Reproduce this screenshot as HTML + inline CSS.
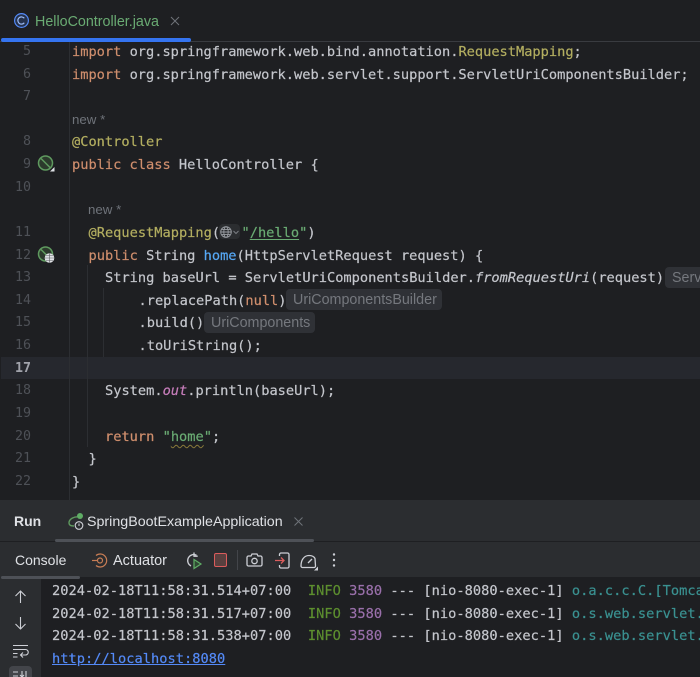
<!DOCTYPE html>
<html><head><meta charset="utf-8"><style>
html,body{margin:0;padding:0;background:#1e1f22}
#r{position:relative;width:700px;height:677px;overflow:hidden;background:#1e1f22;filter:blur(.3px)}
#r>*{position:absolute}
.l,.n,.s{white-space:pre;font-family:"DejaVu Sans Mono","Liberation Mono",monospace;font-size:13.67px;line-height:22px;height:22px;color:#c4c6cc;margin-top:1px;-webkit-text-stroke:.2px currentColor}
.s{letter-spacing:.03px}
.n{width:31px;left:0;text-align:right;color:#4e5157;font-size:13.3px;-webkit-text-stroke:0}
.u{font-family:"Liberation Sans",sans-serif;white-space:pre}
.k{color:#cf8e6d}.a{color:#b3ae60}.t{color:#6aab73}.m{color:#56a8f5}.f{color:#c77dbb;font-style:italic}
.i{font-style:italic}
.h{font-family:"Liberation Sans",sans-serif;font-size:14.3px;height:21px;line-height:23px;background:#2f3136;color:#75787e;border-radius:4px;padding:0 5px 0 7px;white-space:pre}
.nw{font-family:"Liberation Sans",sans-serif;font-size:13.3px;color:#6f737a;line-height:18px;white-space:pre;margin-top:1px}
.g{color:#5d8f2f}.p{color:#9a70ab}.c{color:#3a9191}
.w{text-decoration:underline wavy #8a7a3a 1px;text-underline-offset:3px}
svg{overflow:visible}
</style></head><body><div id="r">
<div style="left:0;top:41px;width:700px;height:1px;background:#393b40"></div>
<div style="left:1px;top:38px;width:190px;height:4px;border-radius:2px;background:#3574f0"></div>
<svg style="left:14px;top:13px" width="16" height="16" viewBox="0 0 16 16"><circle cx="7.5" cy="7.5" r="6.9" fill="#25324d" stroke="#548af7" stroke-width="1.2"/><path d="M10.300 5.300A3.600 3.600 0 1 0 10.300 9.700" fill="none" stroke="#9dbcf7" stroke-width="1.200"/></svg>
<div class="u" style="left:35px;top:13px;font-size:14.3px;line-height:18px;color:#6aab73">HelloController.java</div>
<svg style="left:171px;top:17px" width="8" height="8" viewBox="0 0 8 8"><path d="M0 0l8 8M8 0L0 8" stroke="#6f737a" stroke-width="1"/></svg>

<div style="left:1px;top:357px;width:699px;height:22px;background:#26282e"></div>
<div style="left:69px;top:42px;width:1px;height:458px;background:#2c2e32"></div>
<div style="left:87px;top:265px;width:1px;height:182px;background:#2c2e32"></div>
<div style="left:103px;top:288px;width:1px;height:69px;background:#2c2e32"></div>

<div class="n" style="top:40px">5</div>
<div class="n" style="top:62.6px">6</div>
<div class="n" style="top:85px">7</div>
<div class="n" style="top:130px">8</div>
<div class="n" style="top:153px">9</div>
<div class="n" style="top:176px">10</div>
<div class="n" style="top:221px">11</div>
<div class="n" style="top:244px">12</div>
<div class="n" style="top:266px">13</div>
<div class="n" style="top:289px">14</div>
<div class="n" style="top:311px">15</div>
<div class="n" style="top:334px">16</div>
<div class="n" style="top:357px;color:#a1a3ab;font-weight:bold">17</div>
<div class="n" style="top:379px">18</div>
<div class="n" style="top:402px">19</div>
<div class="n" style="top:425px">20</div>
<div class="n" style="top:447px">21</div>
<div class="n" style="top:470px">22</div>

<div class="l" style="left:72px;top:40px"><span class="k">import</span> org.springframework.web.bind.annotation.<span class="a">RequestMapping</span>;</div>
<div class="l" style="left:72px;top:62.6px"><span class="k">import</span> org.springframework.web.servlet.support.ServletUriComponentsBuilder;</div>
<div class="nw" style="left:72px;top:110px">new *</div>
<div class="l" style="left:72px;top:130px"><span class="a">@Controller</span></div>
<div class="l" style="left:72px;top:153px"><span class="k">public class</span> HelloController {</div>
<div class="nw" style="left:88px;top:200px">new *</div>
<div style="left:219px;top:224px;width:21px;height:15px;border-radius:4px;background:#2b2d30"></div>
<div class="l" style="left:88.5px;top:221px"><span class="a">@RequestMapping</span>(</div>
<svg style="left:220px;top:226px" width="20" height="12" viewBox="0 0 20 12"><g fill="none" stroke="#9a9da3" stroke-width=".9"><circle cx="6" cy="6" r="5.300"/><ellipse cx="6" cy="6" rx="2.200" ry="5.300"/><path d="M1 6h10M1.800 3.400h8.400M1.800 8.600h8.400"/></g><path d="M13.500 5l2.500 2.500L18.500 5" fill="none" stroke="#7a7d83" stroke-width="1"/></svg>
<div class="l" style="left:241.500px;top:221px"><span class="t">"<span style="text-decoration:underline;text-underline-offset:2px">/hello</span>"</span>)</div>
<div class="l" style="left:88.500px;top:244px"><span class="k">public</span> String <span class="m">home</span>(HttpServletRequest request) {</div>
<div class="l" style="left:105px;top:266px">String baseUrl = ServletUriComponentsBuilder.<span class="i">fromRequestUri</span>(request)</div>
<div class="h" style="left:665px;top:267px;width:40px">Serv</div>
<div class="l" style="left:138.500px;top:289px">.replacePath(<span class="k">null</span>)</div>
<div class="h" style="left:286px;top:289px">UriComponentsBuilder</div>
<div class="l" style="left:138.500px;top:311px">.build()</div>
<div class="h" style="left:204px;top:312px">UriComponents</div>
<div class="l" style="left:138.500px;top:334px">.toUriString();</div>
<div class="l" style="left:105px;top:379px">System.<span class="f">out</span>.println(baseUrl);</div>
<div class="l" style="left:105px;top:425px"><span class="k">return</span> <span class="t">"<span class="w">home</span>"</span>;</div>
<div class="l" style="left:88.500px;top:447px">}</div>
<div class="l" style="left:72px;top:470px">}</div>

<svg style="left:37px;top:155px" width="18" height="18" viewBox="0 0 18 18"><circle cx="8.500" cy="8" r="7" fill="#2c3a2c" stroke="#5f9a5f" stroke-width="1.500"/><path d="M4 3.500l9 9" stroke="#5f9a5f" stroke-width="1.500"/><path d="M13 16.500h4.500V12z" fill="#dfe1e5"/></svg>
<svg style="left:37px;top:246px" width="18" height="18" viewBox="0 0 18 18"><circle cx="8.500" cy="8" r="7" fill="#2c3a2c" stroke="#5f9a5f" stroke-width="1.500"/><path d="M4 3.500l9 9" stroke="#5f9a5f" stroke-width="1.500"/><circle cx="12.500" cy="12" r="4.800" fill="#dfe1e5"/><path d="M8 12h9M12.500 7.500v9M9 9.500h7M9 14.500h7" stroke="#5a5c60" stroke-width=".6"/></svg>

<div style="left:0;top:500px;width:700px;height:177px;background:#2b2d30"></div>
<div style="left:0;top:541px;width:700px;height:1px;background:#1e1f22"></div>
<div style="left:41px;top:577px;width:659px;height:100px;background:#1e1f22"></div>
<div class="u" style="left:14px;top:512px;font-size:14px;line-height:18px;color:#dfe1e5;font-weight:bold">Run</div>
<svg style="left:67px;top:511px" width="20" height="20" viewBox="0 0 20 20"><path d="M13 6C7 5 2 8 2 12c0 2 2 3 5 3" fill="none" stroke="#5f9a5f" stroke-width="1.400"/><circle cx="13" cy="5" r="3" fill="#5fad65"/><circle cx="12" cy="14.500" r="3.800" fill="#2b2d30" stroke="#ced0d6" stroke-width="1.100"/><path d="M12 12.500v2.500" stroke="#ced0d6"/></svg>
<div class="u" style="left:87px;top:513px;font-size:14.250px;line-height:18px;color:#dfe1e5">SpringBootExampleApplication</div>
<svg style="left:294px;top:517px" width="9" height="9" viewBox="0 0 9 9"><path d="M.5.5l8 8M8.500.5l-8 8" stroke="#6f737a"/></svg>
<div style="left:55px;top:539px;width:259px;height:3px;border-radius:2px;background:#4e5157"></div>

<div class="u" style="left:15px;top:551px;font-size:14px;line-height:18px;color:#dfe1e5">Console</div>
<div style="left:1px;top:576px;width:79px;height:3px;background:#4e5157;border-radius:2px"></div>
<svg style="left:91px;top:552px" width="17" height="17" viewBox="0 0 17 17"><path d="M5 3.500A6.500 6.500 0 1 1 5 13.500" fill="none" stroke="#c77d55" stroke-width="1.200"/><circle cx="9" cy="8.500" r="2.500" fill="none" stroke="#c77d55" stroke-width="1.200"/><path d="M1 8.500h5.500" stroke="#c77d55" stroke-width="1.200"/></svg>
<div class="u" style="left:113px;top:552px;font-size:14.500px;line-height:18px;color:#dfe1e5">Actuator</div>
<svg style="left:185px;top:552px" width="17" height="16" viewBox="0 0 17 16"><path d="M11.500 3.200A6 6 0 1 0 6 14" fill="none" stroke="#ced0d6" stroke-width="1.300"/><path d="M9 .5v3.700h3.700" fill="none" stroke="#ced0d6" stroke-width="1.300"/><path d="M9 7.500l7 4.500-7 4.500z" fill="#2f4a33" stroke="#5fad65" stroke-width="1.200"/></svg>
<div style="left:214px;top:553px;width:11px;height:12px;border:1.300px solid #db5c5c;border-radius:2px;background:#59403f"></div>
<div style="left:237px;top:550px;width:1px;height:20px;background:#43454a"></div>
<svg style="left:246px;top:552px" width="17" height="16" viewBox="0 0 17 16"><path d="M1 5.500a1.500 1.500 0 0 1 1.500-1.500H5l1-2h5l1 2h2.500A1.500 1.500 0 0 1 16 5.500v7a1.500 1.500 0 0 1-1.500 1.500h-12A1.500 1.500 0 0 1 1 12.500z" fill="none" stroke="#ced0d6" stroke-width="1.300"/><circle cx="8.500" cy="9" r="2.700" fill="none" stroke="#ced0d6" stroke-width="1.300"/></svg>
<svg style="left:275px;top:552px" width="15" height="17" viewBox="0 0 15 17"><path d="M4.500 4V2.500A1.500 1.500 0 0 1 6 1h6.500A1.500 1.500 0 0 1 14 2.500v12a1.500 1.500 0 0 1-1.500 1.500H6a1.500 1.500 0 0 1-1.500-1.500V13" fill="none" stroke="#ced0d6" stroke-width="1.300"/><path d="M0 8.500h9M6 5.500l3 3-3 3" fill="none" stroke="#db5c5c" stroke-width="1.300"/></svg>
<svg style="left:300px;top:553px" width="18" height="18" viewBox="0 0 18 18"><path d="M2.500 14.500a1.500 1.500 0 0 1-1.500-1.500C1 7 4 2.500 9 2.500c3 0 5 1 6 3l.5 7.500a1.500 1.500 0 0 1-1.500 1.500z" fill="none" stroke="#ced0d6" stroke-width="1.300" stroke-linejoin="round"/><path d="M8 10l4-4" stroke="#ced0d6" stroke-width="1.300"/><path d="M14 17.500h4v-4z" fill="#ced0d6"/></svg>
<svg style="left:332px;top:552px" width="4" height="16" viewBox="0 0 4 16"><circle cx="2" cy="2.500" r="1.200" fill="#ced0d6"/><circle cx="2" cy="8" r="1.200" fill="#ced0d6"/><circle cx="2" cy="13.500" r="1.200" fill="#ced0d6"/></svg>

<svg style="left:14px;top:590px" width="13" height="13" viewBox="0 0 13 13"><path d="M6.500 13V1M1.500 6l5-5 5 5" fill="none" stroke="#ced0d6" stroke-width="1.100"/></svg>
<svg style="left:14px;top:617px" width="13" height="13" viewBox="0 0 13 13"><path d="M6.500 0v12M1.500 7l5 5 5-5" fill="none" stroke="#ced0d6" stroke-width="1.100"/></svg>
<svg style="left:13px;top:644px" width="16" height="14" viewBox="0 0 16 14"><path d="M0 1.500h15M0 5.500h12.500a2.700 2.700 0 0 1 0 5.500H7.500M10 8.500L7.500 11 10 13.500M0 9.500h4.500M0 13h4.500" fill="none" stroke="#ced0d6" stroke-width="1.100"/></svg>
<div style="left:9px;top:666px;width:23px;height:20px;border-radius:4px;background:#43454a"></div>
<svg style="left:13px;top:671px" width="15" height="8" viewBox="0 0 15 8"><path d="M0 1h5M0 5h5M9 0v6M7 4l2 2 2-2M13 0v7" fill="none" stroke="#ced0d6" stroke-width="1.100"/></svg>

<div class="s" style="left:52px;top:579px">2024-02-18T11:58:31.514+07:00  <span class="g">INFO</span> <span class="p">3580</span> --- [nio-8080-exec-1] <span class="c">o.a.c.c.C.[Tomcat].[localhost]</span></div>
<div class="s" style="left:52px;top:602px">2024-02-18T11:58:31.517+07:00  <span class="g">INFO</span> <span class="p">3580</span> --- [nio-8080-exec-1] <span class="c">o.s.web.servlet.DispatcherServlet</span></div>
<div class="s" style="left:52px;top:624px">2024-02-18T11:58:31.538+07:00  <span class="g">INFO</span> <span class="p">3580</span> --- [nio-8080-exec-1] <span class="c">o.s.web.servlet.DispatcherServlet</span></div>
<div class="s" style="left:52px;top:647px;color:#548af7;text-decoration:underline">http://localhost:8080</div>
</div></body></html>
